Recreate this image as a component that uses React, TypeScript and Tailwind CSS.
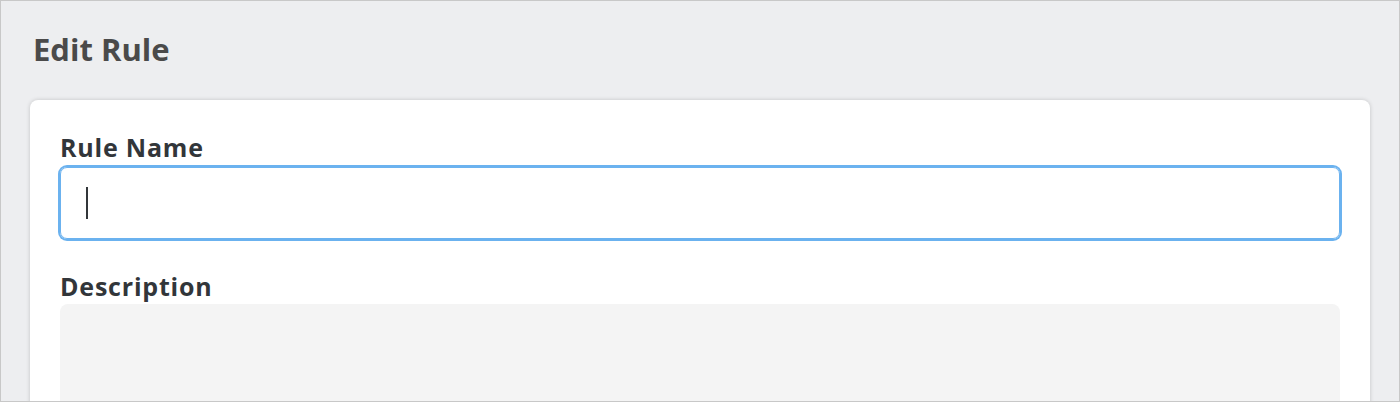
export default function App() {
  return (
    <div className="h-[402px] overflow-hidden border border-[#c8c8c8] bg-[#edeef0] font-['Open_Sans',sans-serif]">
      <h1 className="pl-[32px] pt-[30px] text-[31px] font-bold leading-[36px] text-[#4a4a4a]">Edit Rule</h1>

      <div className="ml-[29px] mr-[29px] mt-[33px] h-[400px] rounded-[8px] bg-white px-[30px] pt-[31px] shadow-[0_0_4px_rgba(0,0,0,0.18)]">
        <label className="block text-[25px] font-bold leading-[32px] tracking-[0.8px] text-[#32363a]">Rule Name</label>
        <div className="mt-[4px] flex h-[72px] items-center rounded-[7px] border border-[#6bb2ef] px-[25px] ring-2 ring-[#6bb2ef]">
          <span className="h-[32px] w-[2px] bg-[#32363a]" />
        </div>

        <label className="mt-[31px] block text-[25px] font-bold leading-[32px] tracking-[0.8px] text-[#32363a]">Description</label>
        <div className="mt-[2px] h-[200px] rounded-[8px] bg-[#f4f4f4]" />
      </div>
    </div>
  )
}
